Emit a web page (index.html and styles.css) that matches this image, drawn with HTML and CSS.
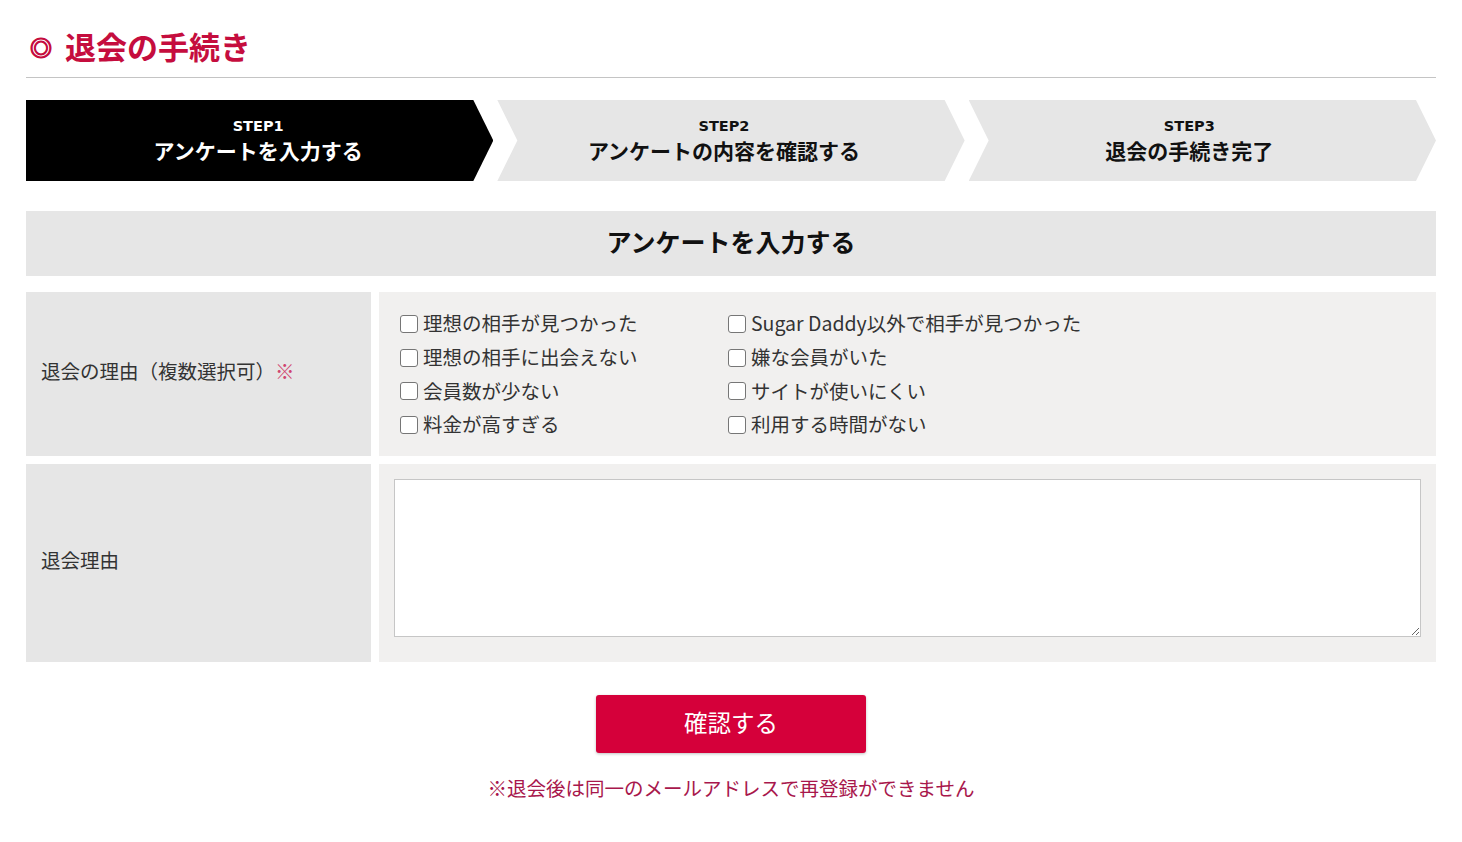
FILE: index.html
```html
<!DOCTYPE html>
<html lang="ja">
<head>
<meta charset="utf-8">
<title>退会の手続き</title>
<link rel="stylesheet" href="styles.css">
</head>
<body>
<div class="page">
  <h1 class="title"><span class="title-mark">◎</span>退会の手続き</h1>

  <ol class="steps">
    <li class="step step-first step-active">
      <span class="step-no">STEP1</span>
      <span class="step-name">アンケートを入力する</span>
    </li>
    <li class="step step-mid">
      <span class="step-no">STEP2</span>
      <span class="step-name">アンケートの内容を確認する</span>
    </li>
    <li class="step step-last">
      <span class="step-no">STEP3</span>
      <span class="step-name">退会の手続き完了</span>
    </li>
  </ol>

  <h2 class="section-head">アンケートを入力する</h2>

  <form class="form">
    <div class="form-table">
      <div class="cell-label">退会の理由（複数選択可）<span class="req">※</span></div>
      <div class="cell-value cell-checks">
        <div class="checks">
          <label class="check"><input type="checkbox"><span>理想の相手が見つかった</span></label>
          <label class="check"><input type="checkbox"><span>Sugar Daddy以外で相手が見つかった</span></label>
          <label class="check"><input type="checkbox"><span>理想の相手に出会えない</span></label>
          <label class="check"><input type="checkbox"><span>嫌な会員がいた</span></label>
          <label class="check"><input type="checkbox"><span>会員数が少ない</span></label>
          <label class="check"><input type="checkbox"><span>サイトが使いにくい</span></label>
          <label class="check"><input type="checkbox"><span>料金が高すぎる</span></label>
          <label class="check"><input type="checkbox"><span>利用する時間がない</span></label>
        </div>
      </div>
      <div class="cell-label">退会理由</div>
      <div class="cell-value cell-text">
        <textarea class="reason"></textarea>
      </div>
    </div>

    <div class="actions">
      <button type="button" class="btn-confirm">確認する</button>
      <p class="note">※退会後は同一のメールアドレスで再登録ができません</p>
    </div>
  </form>
</div>
</body>
</html>
```

FILE: styles.css
```css
* { box-sizing: border-box; }

html, body {
  margin: 0;
  padding: 0;
  background: #fff;
}

body {
  font-family: "Noto Sans CJK JP", "Noto Sans", sans-serif;
  color: #333;
}

.page {
  padding: 0 26px 40px;
}

.title {
  margin: 0;
  padding: 26px 0 11px 4px;
  font-size: 31px;
  line-height: 40px;
  font-weight: 700;
  color: #c50d3e;
  border-bottom: 1px solid #c4c4c4;
  display: flex;
  align-items: center;
}

.title-mark {
  font-size: 22px;
  margin-right: 13px;
  font-weight: 700;
  -webkit-text-stroke: 1.2px #c50d3e;
}

.steps {
  list-style: none;
  margin: 22px 0 0;
  padding: 0;
  display: flex;
  gap: 4px;
  height: 81px;
}

.step {
  flex: 0 0 calc((100% - 8px) / 3);
  display: flex;
  flex-direction: column;
  align-items: center;
  justify-content: center;
  background: #e6e6e6;
  color: #111;
  font-weight: 700;
  padding-bottom: 1px;
}

.step-first {
  clip-path: polygon(0 0, calc(100% - 20px) 0, 100% 50%, calc(100% - 20px) 100%, 0 100%);
  padding-right: 3px;
}

.step-mid {
  clip-path: polygon(0 0, calc(100% - 20px) 0, 100% 50%, calc(100% - 20px) 100%, 0 100%, 20px 50%);
  padding-right: 14px;
}

.step-last {
  clip-path: polygon(0 0, calc(100% - 20px) 0, 100% 50%, calc(100% - 20px) 100%, 0 100%, 20px 50%);
  padding-right: 26px;
}

.step-active {
  background: #000;
  color: #fff;
}

.step-no {
  font-size: 14.5px;
  line-height: 18px;
  font-weight: 700;
  font-family: "DejaVu Sans", "Noto Sans CJK JP", sans-serif;
}

.step-name {
  font-size: 21px;
  line-height: 28px;
  margin-top: 1px;
}

.section-head {
  margin: 30px 0 0;
  height: 65px;
  background: #e6e6e6;
  display: flex;
  align-items: center;
  justify-content: center;
  font-size: 25px;
  font-weight: 700;
  color: #111;
  padding-bottom: 5px;
}

.form {
  margin: 16px 0 0;
}

.form-table {
  display: grid;
  grid-template-columns: 345px 1fr;
  gap: 8px;
}

.cell-label {
  background: #e6e6e6;
  display: flex;
  align-items: center;
  padding: 0 15px 7px;
  font-size: 19.5px;
  color: #333;
}

.req {
  color: #d0456f;
}

.cell-value {
  background: #f1f0ef;
}

.cell-checks {
  padding: 15px 21px 12px 21px;
  height: 164px;
}

.checks {
  display: grid;
  grid-template-columns: 328px auto;
  justify-content: start;
}

.check {
  display: flex;
  align-items: center;
  gap: 5px;
  height: 33.7px;
  font-size: 19.5px;
  color: #333;
}

.check span {
  padding-bottom: 2px;
}

.check input {
  appearance: none;
  -webkit-appearance: none;
  margin: 0;
  width: 18px;
  height: 18px;
  border: 1px solid #767676;
  border-radius: 3px;
  background: #fff;
  flex: none;
}

.cell-text {
  padding: 15px 15px 25px;
  height: 198px;
}

.reason {
  display: block;
  width: 100%;
  height: 158px;
  border: 1px solid #c6c6c6;
  background: #fff;
  margin: 0;
  font-family: inherit;
  font-size: 16px;
}

.actions {
  display: flex;
  flex-direction: column;
  align-items: center;
}

.btn-confirm {
  margin-top: 33px;
  width: 270px;
  height: 58px;
  border: none;
  border-radius: 3px;
  background: #d5003a;
  color: #fff;
  font-family: inherit;
  font-size: 23.5px;
  padding: 0 0 5px;
  box-shadow: 0 1px 3px rgba(0, 0, 0, 0.25);
}

.note {
  margin: 20px 0 0;
  font-size: 19.5px;
  line-height: 30px;
  color: #a8174c;
}
```
